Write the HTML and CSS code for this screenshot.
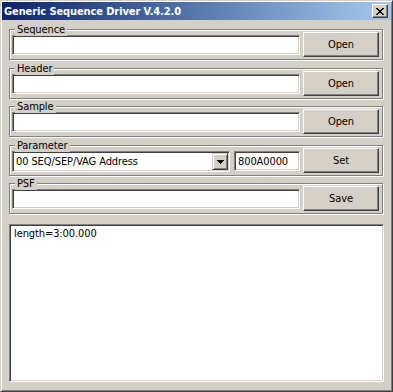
FILE: index.html
```html
<html>
<head>
    <title>Generic Sequence Driver V.4.2.0</title>
    <meta charset="utf-8">
    <link rel="stylesheet" href="styles.css">
</head>
<body>
    <div class="window">
        <div class="titlebar">
            <span class="title">Generic Sequence Driver V.4.2.0</span>
            <button class="close" type="button">
                <svg width="8" height="7" viewBox="0 0 8 7" shape-rendering="crispEdges">
                    <path fill="#000" d="M0 0h2v1H0z M6 0h2v1H6z M1 1h2v1H1z M5 1h2v1H5z M2 2h4v1H2z M3 3h2v1H3z M2 4h4v1H2z M1 5h2v1H1z M5 5h2v1H5z M0 6h2v1H0z M6 6h2v1H6z"/>
                </svg>
            </button>
        </div>

        <div class="client">
            <div class="group">
                <span class="caption">Sequence</span>
                <div class="row">
                    <input class="edit wide" type="text">
                    <button class="btn" type="button">Open</button>
                </div>
            </div>

            <div class="group">
                <span class="caption">Header</span>
                <div class="row">
                    <input class="edit wide" type="text">
                    <button class="btn" type="button">Open</button>
                </div>
            </div>

            <div class="group">
                <span class="caption">Sample</span>
                <div class="row">
                    <input class="edit wide" type="text">
                    <button class="btn" type="button">Open</button>
                </div>
            </div>

            <div class="group">
                <span class="caption">Parameter</span>
                <div class="row">
                    <div class="combo">
                        <span class="combo-value">00 SEQ/SEP/VAG Address</span>
                        <span class="drop">
                            <svg width="7" height="4" viewBox="0 0 7 4" shape-rendering="crispEdges">
                                <path fill="#000" d="M0 0h7v1H0z M1 1h5v1H1z M2 2h3v1H2z M3 3h1v1H3z"/>
                            </svg>
                        </span>
                    </div>
                    <input class="edit addr" type="text" value="800A0000">
                    <button class="btn" type="button">Set</button>
                </div>
            </div>

            <div class="group">
                <span class="caption">PSF</span>
                <div class="row">
                    <input class="edit wide" type="text">
                    <button class="btn" type="button">Save</button>
                </div>
            </div>

            <textarea class="log">length=3:00.000</textarea>
        </div>
    </div>
</body>
</html>
```

FILE: styles.css
```css
/* Win2000 classic dialog */
body {
    margin: 0;
    font-family: "DejaVu Sans Condensed", "DejaVu Sans", Tahoma, sans-serif;
    font-size: 11px;
    letter-spacing: -0.1px;
    color: #000;
    background-color: #d4d0c8;
}

.window {
    width: 393px;
    height: 392px;
    box-sizing: border-box;
    display: flex;
    flex-direction: column;
    padding: 1px;
    background-color: #d4d0c8;
    border: 1px solid;
    border-color: #d4d0c8 #404040 #404040 #d4d0c8;
    box-shadow: inset 1px 1px #fff, inset -1px -1px #808080;
}

.titlebar {
    height: 18px;
    display: flex;
    align-items: center;
    padding: 0 3px 0 2px;
    background: linear-gradient(to right, #0a246a, #a6caf0);
    color: #fff;
}

.title {
    flex: 1;
    font-weight: bold;
    white-space: nowrap;
}

.close {
    width: 16px;
    height: 14px;
    box-sizing: border-box;
    display: flex;
    align-items: center;
    justify-content: center;
    padding: 0;
    margin: 0;
    background-color: #d4d0c8;
    border: 1px solid;
    border-color: #fff #404040 #404040 #fff;
    box-shadow: inset -1px -1px #808080;
}

.client {
    flex: 1;
    display: flex;
    flex-direction: column;
    gap: 7px;
    padding: 9px 8px 8px 7px;
}

/* etched group box */
.group {
    position: relative;
    height: 31px;
    box-sizing: border-box;
    border: 1px solid #808080;
    box-shadow: inset 1px 1px #fff, 1px 1px #fff;
}

.group:nth-child(even) {
    margin-top: 1px;
}

.caption {
    position: absolute;
    top: -7px;
    left: 5px;
    padding: 0 2px;
    line-height: 13px;
    background-color: #d4d0c8;
}

.row {
    display: flex;
    align-items: flex-start;
    padding: 2px 3px 0 2px;
}

.edit {
    height: 20px;
    box-sizing: border-box;
    margin: 3px 0 0 0;
    padding: 0 3px;
    font: inherit;
    letter-spacing: inherit;
    background-color: #fff;
    border: 1px solid;
    border-color: #808080 #fff #fff #808080;
    box-shadow: inset 1px 1px #404040, inset -1px -1px #d4d0c8;
    outline: none;
}

.wide {
    flex: 1;
    min-width: 0;
    margin-right: 3px;
}

.addr {
    width: 66px;
    margin-right: 3px;
}

.btn {
    width: 76px;
    height: 25px;
    box-sizing: border-box;
    margin: 0;
    padding: 0;
    font: inherit;
    letter-spacing: inherit;
    color: #000;
    background-color: #d4d0c8;
    border: 1px solid;
    border-color: #fff #404040 #404040 #fff;
    box-shadow: inset -1px -1px #808080;
}

.combo {
    width: 218px;
    height: 21px;
    box-sizing: border-box;
    display: flex;
    margin: 3px 4px 0 0;
    background-color: #fff;
    border: 1px solid;
    border-color: #808080 #fff #fff #808080;
    box-shadow: inset 1px 1px #404040, inset -1px -1px #d4d0c8;
    padding: 1px;
}

.combo-value {
    flex: 1;
    padding-left: 2px;
    line-height: 17px;
    white-space: nowrap;
}

.drop {
    width: 16px;
    height: 17px;
    box-sizing: border-box;
    display: flex;
    align-items: center;
    justify-content: center;
    background-color: #d4d0c8;
    border: 1px solid;
    border-color: #d4d0c8 #404040 #404040 #d4d0c8;
    box-shadow: inset 1px 1px #fff, inset -1px -1px #808080;
}

.log {
    flex: 1;
    margin: 3px -1px 0 0;
    padding: 2px 4px;
    resize: none;
    font: inherit;
    letter-spacing: inherit;
    line-height: 13px;
    background-color: #fff;
    border: 1px solid;
    border-color: #808080 #fff #fff #808080;
    box-shadow: inset 1px 1px #404040, inset -1px -1px #d4d0c8;
    outline: none;
}
```
